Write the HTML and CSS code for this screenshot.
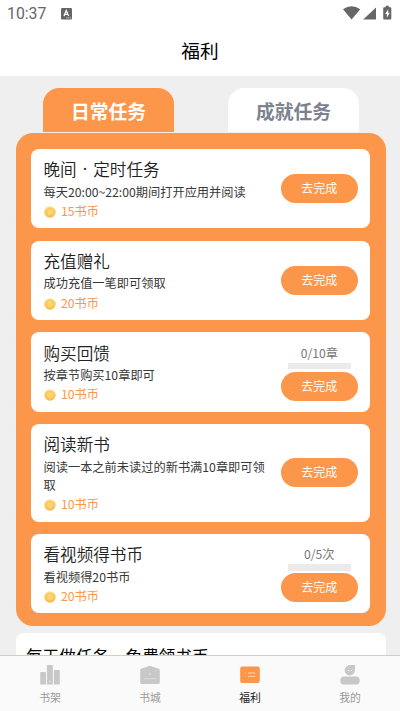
FILE: index.html
```html
<!DOCTYPE html>
<html lang="zh-CN">
<head>
<meta charset="utf-8">
<meta name="viewport" content="width=device-width">
<title>福利</title>
<link rel="stylesheet" href="styles.css">
</head>
<body>
<svg class="defs" width="0" height="0" aria-hidden="true">
  <defs>
    <linearGradient id="gold" x1="0" y1="0" x2="0" y2="1"><stop offset="0" stop-color="#ffe187"/><stop offset="1" stop-color="#f8b94c"/></linearGradient>
    <symbol id="coin" viewBox="0 0 12 12"><circle cx="6" cy="6" r="5.8" fill="url(#gold)"/><circle cx="6" cy="6" r="3.8" fill="#ffd067" stroke="#f5bc50" stroke-width=".6"/><path d="M4.2 4.8h3.6M4.2 7h3.6" stroke="#ffdf91" stroke-width=".6"/></symbol>
  </defs>
</svg>
<div class="app">
  <header class="status">
    <span class="time">10:37</span>
    <svg class="keyboard" width="11" height="12" viewBox="0 0 11 12"><rect width="11" height="11.5" rx="1.2" fill="#666"/><path d="M3 8l2.3-5.4L7.6 8M4 6.3h2.7" fill="none" stroke="#fff" stroke-width="1.3"/><path d="M5.5 9.8h1m.7 0h1m.6 0h1" stroke="#fff" stroke-width=".8"/></svg>
    <svg class="signals" width="50" height="16" viewBox="0 0 50 16"><path d="M0 4.2Q8.6-1.6 17.2 4.2L8.6 14.5ZM20.2 14.5 33 2.6v11.9ZM41.2 2.2h1.5V.8h3.1v1.4h1.5q1 0 1 1v10.3q0 1-1 1h-6.1q-1 0-1-1V3.2q0-1 1-1Z" fill="#666"/><path d="M45.2 4.2l-3.1 4.7h1.7v3.8l3-5h-1.6Z" fill="#fff"/></svg>
  </header>
  <h1 class="page-title">福利</h1>
  <main class="content">
    <nav class="tabs"><a class="tab selected">日常任务</a><a class="tab">成就任务</a></nav>
    <section class="panel">
      <article class="card">
        <div class="info"><h2>晚间<span class="dot">·</span>定时任务</h2><p>每天20:00~22:00期间打开应用并阅读</p><div class="reward"><svg><use href="#coin"/></svg>15书币</div></div>
        <div class="action"><button>去完成</button></div>
      </article>
      <article class="card">
        <div class="info"><h2>充值赠礼</h2><p>成功充值一笔即可领取</p><div class="reward"><svg><use href="#coin"/></svg>20书币</div></div>
        <div class="action"><button>去完成</button></div>
      </article>
      <article class="card">
        <div class="info"><h2>购买回馈</h2><p>按章节购买10章即可</p><div class="reward"><svg><use href="#coin"/></svg>10书币</div></div>
        <div class="action"><span class="count">0/10章</span><div class="track"></div><button>去完成</button></div>
      </article>
      <article class="card">
        <div class="info"><h2>阅读新书</h2><p>阅读一本之前未读过的新书满10章即可领取</p><div class="reward"><svg><use href="#coin"/></svg>10书币</div></div>
        <div class="action"><button>去完成</button></div>
      </article>
      <article class="card">
        <div class="info"><h2>看视频得书币</h2><p>看视频得20书币</p><div class="reward"><svg><use href="#coin"/></svg>20书币</div></div>
        <div class="action"><span class="count">0/5次</span><div class="track"></div><button>去完成</button></div>
      </article>
    </section>
    <section class="more"><h2>每天做任务，免费领书币</h2></section>
  </main>
  <footer class="nav">
    <a><svg width="20" height="20" viewBox="0 0 20 20"><path d="M.8 7h4.5q.7 0 .7.7v11.8H.2V7.6Q.2 7 .8 7ZM7.6 0h4.5q.7 0 .7.7v18.8H6.9V.7q0-.7.7-.7ZM14.3 5h4.8q.7 0 .7.7v13.8h-6V5.6q0-.6.5-.6Z" fill="#c8c8c8"/><circle cx="9.9" cy="16.5" r=".8" fill="#eee"/></svg>书架</a>
    <a><svg width="20" height="20" viewBox="0 0 20 20"><path d="M1.1 3.8 9.2 1.1q.8-.3 1.6 0l8.1 2.7q.9.3.9 1.3v12.4q0 1.5-1.5 1.5H1.7q-1.5 0-1.5-1.5V5.1q0-1 .9-1.3Z" fill="#c8c8c8"/><circle cx="10" cy="9" r=".8" fill="#eee"/><path d="M4 13.8h12" stroke="#e0e0e0" stroke-width=".9"/></svg>书城</a>
    <a class="current"><svg width="20" height="20" viewBox="0 0 20 20"><rect x=".2" y="1.4" width="19.6" height="16.7" rx="2" fill="#fc964b"/><path d="M8 8h7.2M8 11.4h7.2" stroke="#ffd4b3"/><path d="M4.9 8H6M4.9 11.4H6" stroke="#ffba87" stroke-width=".9"/></svg>福利</a>
    <a><svg width="20" height="20" viewBox="0 0 20 20"><path d="M10 0h5v5.3a5.2 5.2 0 1 1-5-5.3Z" fill="#c8c8c8"/><rect x=".3" y="11.5" width="19.4" height="8" rx="3.5" fill="#c8c8c8"/><path d="M7.8 5.5h1.1m2.1 0h1.1" stroke="#fff"/></svg>我的</a>
  </footer>
</div>
</body>
</html>
```

FILE: styles.css
```css
* { box-sizing: border-box; }
body { margin: 0; font-family: "Noto Sans CJK SC", sans-serif; font-weight: 400; background: #efefef; overflow: hidden; }
h1, h2, p { margin: 0; font-weight: 400; }
.defs { position: absolute; }
.app { display: flex; flex-direction: column; width: 400px; height: 711px; }
.status { flex: none; display: flex; align-items: center; height: 28px; padding: 0 7px; background: #fff; }
.time { width: 54px; font: 400 15.8px/28px Roboto, sans-serif; color: #666; }
.keyboard { margin-bottom: 1px; }
.signals { margin: 0 0 2px auto; }
.page-title { flex: none; height: 47.5px; background: #fff; color: #000; font-size: 18.7px; line-height: 43px; text-align: center; }
.content { flex: 1; min-height: 0; overflow: hidden; padding: 12.5px 14.5px 0 15.5px; }
.tabs { display: flex; justify-content: space-between; padding: 0 26.5px 0 27.5px; }
.tab { width: 131px; height: 44px; border-radius: 16px 16px 0 0; background: #fff; color: #7d8290; font-size: 18.8px; line-height: 46px; font-weight: 700; text-align: center; }
.tab.selected { background: #fc964b; color: #fff; }
.panel { display: flex; flex-direction: column; gap: 12.3px; margin-top: 1.3px; padding: 15.7px 15.5px 12.3px; border-radius: 17px; background: #fc964b; }
.card { display: flex; justify-content: space-between; align-items: center; padding: 8.4px 12.2px 7.4px 12.5px; border-radius: 8px; background: #fff; }
.info { width: 226px; }
.info h2 { height: 25.3px; font-size: 16.6px; line-height: 24px; font-weight: 350; color: #222; }
.dot { display: inline-block; width: 16.6px; height: 24px; vertical-align: top; font-family: "Noto Sans", sans-serif; font-weight: 400; text-align: center; }
.info p { font-size: 12.23px; line-height: 18.3px; color: #383838; }
.reward { display: flex; align-items: center; height: 20px; font-size: 12.23px; line-height: 20px; color: #fc964b; }
.reward svg { width: 12px; height: 12px; margin: 2px 5px 0 .5px; }
.action { width: 77px; display: flex; flex-direction: column; align-items: center; }
.action button { width: 77px; height: 29px; margin-bottom: .8px; padding: 0 0 1px; border: 0; border-radius: 15px; background: #fc964b; color: #fff; font: inherit; font-size: 12.1px; line-height: 28px; }
.count { color: #777; font-size: 12.2px; line-height: 18px; height: 19px; }
.track { width: 63px; height: 6.5px; margin-bottom: 2.5px; background: #ebebeb; }
.more { height: 80px; margin-top: 7.3px; padding: 8px 10.5px; border-radius: 8px; background: #fff; color: #000; }
.more h2 { font-size: 16.6px; line-height: 30px; }
.nav { flex: none; display: grid; grid-template-columns: repeat(4, 1fr); height: 56px; border-top: 1px solid #ccc; background: #fafafa; }
.nav a { display: flex; flex-direction: column; align-items: center; padding-top: 9px; color: #999; font-size: 10.8px; line-height: 16px; }
.nav svg { margin-bottom: 4px; }
.nav .current { color: #222; }
```
